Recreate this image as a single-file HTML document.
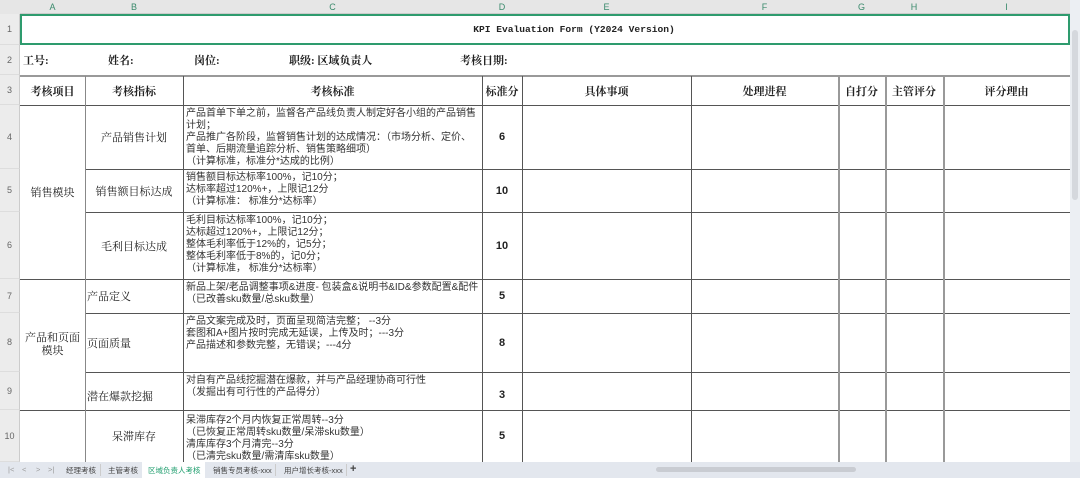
<!DOCTYPE html><html><head><meta charset="utf-8"><style>
*{margin:0;padding:0;box-sizing:border-box}
body{width:1080px;height:478px;overflow:hidden;background:#fff;position:relative;font-family:"Liberation Serif","Noto Serif CJK SC",serif;color:#222}
.a{position:absolute}
.ch{top:0;height:14px;background:#e6e6e6;font:9px "Liberation Sans",sans-serif;color:#3a8a6c;text-align:center;line-height:14px;border-bottom:1px solid #ccc}
.rh{left:0;width:20px;background:#ececec;font:9px "Liberation Sans",sans-serif;color:#666;text-align:center;border-right:1px solid #ccc;border-bottom:1px solid #ddd;display:flex;align-items:center;justify-content:center}
.vl{width:1px;background:#555}
.hl{height:1px;background:#555}
.c{display:flex;align-items:center;font-size:11px}
.ctr{justify-content:center;text-align:center}
.t{font-size:10px;line-height:12px;font-family:"Liberation Sans","Noto Sans CJK SC",sans-serif;color:#333;padding-left:3px;white-space:nowrap;margin-top:2px}
.n{font:bold 11px "Liberation Sans",sans-serif;justify-content:center}
.b{font-weight:bold;font-size:11px}
</style></head><body>
<div class="a" style="left:0;top:0;width:20px;height:14px;background:#e6e6e6"></div>
<div class="a ch" style="left:20px;width:65px">A</div>
<div class="a ch" style="left:85px;width:98px">B</div>
<div class="a ch" style="left:183px;width:299px">C</div>
<div class="a ch" style="left:482px;width:40px">D</div>
<div class="a ch" style="left:522px;width:169px">E</div>
<div class="a ch" style="left:691px;width:147px">F</div>
<div class="a ch" style="left:838px;width:47px">G</div>
<div class="a ch" style="left:885px;width:58px">H</div>
<div class="a ch" style="left:943px;width:127px">I</div>
<div class="a" style="left:1070px;top:0;width:10px;height:462px;background:#eceff3"></div>
<div class="a" style="left:1072px;top:30px;width:6px;height:170px;background:#d5d8dd;border-radius:3px"></div>

<div class="a rh" style="top:14px;height:31px">1</div>
<div class="a rh" style="top:45px;height:30px">2</div>
<div class="a rh" style="top:75px;height:30px">3</div>
<div class="a rh" style="top:105px;height:64px">4</div>
<div class="a rh" style="top:169px;height:43px">5</div>
<div class="a rh" style="top:212px;height:67px">6</div>
<div class="a rh" style="top:279px;height:34px">7</div>
<div class="a rh" style="top:313px;height:59px">8</div>
<div class="a rh" style="top:372px;height:38px">9</div>
<div class="a rh" style="top:410px;height:52px">10</div>

<div class="a" style="left:20px;top:14px;width:1050px;height:31px;border:2px solid #2e9b6e"></div>
<div class="a c b" style="left:20px;top:14px;width:1050px;height:31px;justify-content:center;font-family:'Liberation Mono',monospace;font-size:9.6px;padding-left:58px">KPI Evaluation Form (Y2024 Version)</div>
<div class="a c b" style="left:23px;top:45px;height:30px">工号:</div>
<div class="a c b" style="left:108px;top:45px;height:30px">姓名:</div>
<div class="a c b" style="left:194px;top:45px;height:30px">岗位:</div>
<div class="a c b" style="left:289px;top:45px;height:30px">职级: 区域负责人</div>
<div class="a c b" style="left:460px;top:45px;height:30px">考核日期:</div>

<div class="a hl" style="left:20px;top:75px;width:1050px;background:#999;height:2px"></div>
<div class="a hl" style="left:20px;top:105px;width:1050px"></div>
<div class="a hl" style="left:85px;top:169px;width:985px"></div>
<div class="a hl" style="left:85px;top:212px;width:985px"></div>
<div class="a hl" style="left:20px;top:279px;width:1050px"></div>
<div class="a hl" style="left:85px;top:313px;width:985px"></div>
<div class="a hl" style="left:85px;top:372px;width:985px"></div>
<div class="a hl" style="left:20px;top:410px;width:1050px"></div>
<div class="a vl" style="left:85px;top:76px;height:386px;background:#888"></div>
<div class="a vl" style="left:183px;top:76px;height:386px"></div>
<div class="a vl" style="left:482px;top:76px;height:386px"></div>
<div class="a vl" style="left:522px;top:76px;height:386px"></div>
<div class="a vl" style="left:691px;top:76px;height:386px"></div>
<div class="a vl" style="left:838px;top:76px;height:386px;background:#999;width:2px"></div>
<div class="a vl" style="left:885px;top:76px;height:386px;background:#999;width:2px"></div>
<div class="a vl" style="left:943px;top:76px;height:386px;background:#999;width:2px"></div>

<div class="a c ctr b" style="left:20px;top:76px;width:65px;height:29px">考核项目</div>
<div class="a c ctr b" style="left:85px;top:76px;width:98px;height:29px">考核指标</div>
<div class="a c ctr b" style="left:183px;top:76px;width:299px;height:29px">考核标准</div>
<div class="a c ctr b" style="left:482px;top:76px;width:40px;height:29px">标准分</div>
<div class="a c ctr b" style="left:522px;top:76px;width:169px;height:29px">具体事项</div>
<div class="a c ctr b" style="left:691px;top:76px;width:147px;height:29px">处理进程</div>
<div class="a c ctr b" style="left:838px;top:76px;width:47px;height:29px">自打分</div>
<div class="a c ctr b" style="left:885px;top:76px;width:58px;height:29px">主管评分</div>
<div class="a c ctr b" style="left:943px;top:76px;width:127px;height:29px">评分理由</div>

<div class="a c ctr" style="left:20px;top:105px;width:65px;height:174px">销售模块</div>
<div class="a c ctr" style="left:20px;top:279px;width:65px;height:131px;line-height:13px">产品和页面<br>模块</div>

<div class="a c ctr" style="left:85px;top:105px;width:98px;height:64px">产品销售计划</div>
<div class="a c ctr" style="left:85px;top:169px;width:98px;height:43px">销售额目标达成</div>
<div class="a c ctr" style="left:85px;top:212px;width:98px;height:67px">毛利目标达成</div>
<div class="a c" style="left:87px;top:279px;width:96px;height:34px">产品定义</div>
<div class="a c" style="left:87px;top:313px;width:96px;height:59px">页面质量</div>
<div class="a c" style="left:87px;top:372px;width:96px;height:38px;padding-top:10px">潜在爆款挖掘</div>
<div class="a c ctr" style="left:85px;top:410px;width:98px;height:52px">呆滞库存</div>

<div class="a t" style="left:183px;top:106px">产品首单下单之前，监督各产品线负责人制定好各小组的产品销售<br>计划；<br>产品推广各阶段，监督销售计划的达成情况：（市场分析、定价、<br>首单、后期流量追踪分析、销售策略细项）<br>（计算标准，标准分*达成的比例）</div>
<div class="a t" style="left:183px;top:170px">销售额目标达标率100%，记10分；<br>达标率超过120%+，上限记12分<br>（计算标准： 标准分*达标率）</div>
<div class="a t" style="left:183px;top:213px">毛利目标达标率100%，记10分；<br>达标超过120%+，上限记12分；<br>整体毛利率低于12%的，记5分；<br>整体毛利率低于8%的，记0分；<br>（计算标准， 标准分*达标率）</div>
<div class="a t" style="left:183px;top:280px">新品上架/老品调整事项&amp;进度- 包装盒&amp;说明书&amp;ID&amp;参数配置&amp;配件<br>（已改善sku数量/总sku数量）</div>
<div class="a t" style="left:183px;top:314px">产品文案完成及时，页面呈现简洁完整； --3分<br>套图和A+图片按时完成无延误，上传及时；---3分<br>产品描述和参数完整，无错误；---4分</div>
<div class="a t" style="left:183px;top:373px">对自有产品线挖掘潜在爆款，并与产品经理协商可行性<br>（发掘出有可行性的产品得分）</div>
<div class="a t" style="left:183px;top:413px">呆滞库存2个月内恢复正常周转--3分<br>（已恢复正常周转sku数量/呆滞sku数量）<br>清库库存3个月清完--3分<br>（已清完sku数量/需清库sku数量）</div>

<div class="a c n" style="left:482px;top:105px;width:40px;height:64px">6</div>
<div class="a c n" style="left:482px;top:169px;width:40px;height:43px">10</div>
<div class="a c n" style="left:482px;top:212px;width:40px;height:67px">10</div>
<div class="a c n" style="left:482px;top:279px;width:40px;height:34px">5</div>
<div class="a c n" style="left:482px;top:313px;width:40px;height:59px">8</div>
<div class="a c n" style="left:482px;top:372px;width:40px;height:38px;padding-top:8px">3</div>
<div class="a c n" style="left:482px;top:410px;width:40px;height:52px">5</div>

<div class="a" style="left:0;top:462px;width:1080px;height:16px;background:#e3e7ee;font:7.5px 'Liberation Sans','Noto Sans CJK SC',sans-serif;color:#444">
<span class="a" style="left:8px;top:3px;color:#999">|&lt;</span>
<span class="a" style="left:22px;top:3px;color:#999">&lt;</span>
<span class="a" style="left:36px;top:3px;color:#999">&gt;</span>
<span class="a" style="left:48px;top:3px;color:#999">&gt;|</span>
<span class="a" style="left:66px;top:3px">经理考核</span>
<span class="a" style="left:100px;top:2px;width:1px;height:12px;background:#ccc"></span>
<span class="a" style="left:108px;top:3px">主管考核</span>
<span class="a" style="left:142px;top:0;width:63px;height:16px;background:#fff"></span>
<span class="a" style="left:148px;top:3px;color:#1f9e6e">区域负责人考核</span>
<span class="a" style="left:213px;top:3px">销售专员考核-xxx</span>
<span class="a" style="left:275px;top:2px;width:1px;height:12px;background:#ccc"></span>
<span class="a" style="left:284px;top:3px">用户增长考核-xxx</span>
<span class="a" style="left:346px;top:2px;width:1px;height:12px;background:#ccc"></span>
<span class="a" style="left:350px;top:1px;font-size:11px;font-weight:bold">+</span>
<span class="a" style="left:656px;top:5px;width:200px;height:5px;background:#c9ccd2;border-radius:3px"></span>
</div>
</body></html>
